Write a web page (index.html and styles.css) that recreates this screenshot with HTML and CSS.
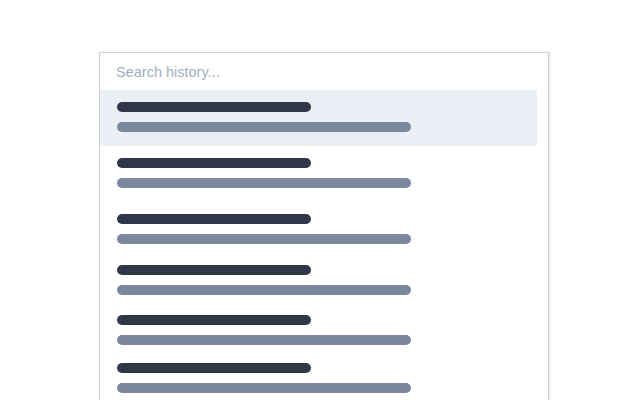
FILE: index.html
```html
<!DOCTYPE html>
<html>
<head>
<meta charset="utf-8">
<link rel="stylesheet" href="styles.css">
</head>
<body>
<div class="panel">
  <div class="search">
    <input class="search-input" type="text" placeholder="Search history...">
  </div>
  <ul class="list">
    <li class="row row--active"><span class="bar bar--title"></span><span class="bar bar--url"></span></li>
    <li class="row"><span class="bar bar--title"></span><span class="bar bar--url"></span></li>
    <li class="row row--b"><span class="bar bar--title"></span><span class="bar bar--url"></span></li>
    <li class="row row--c"><span class="bar bar--title"></span><span class="bar bar--url"></span></li>
    <li class="row row--d"><span class="bar bar--title"></span><span class="bar bar--url"></span></li>
    <li class="row row--d"><span class="bar bar--title"></span><span class="bar bar--url"></span></li>
    <li class="row"><span class="bar bar--title"></span><span class="bar bar--url"></span></li>
  </ul>
</div>
</body>
</html>
```
FILE: styles.css
```css
* { box-sizing: border-box; }
html, body { margin: 0; padding: 0; background: #fff; }
html { height: 400px; overflow: hidden; }
body {
  font-family: "Liberation Sans", Arial, sans-serif;
  padding-top: 52px;
  overflow: hidden;
  height: 400px;
}
.panel {
  margin-left: 99px;
  width: 450px;
  height: 348px;
  overflow: hidden;
  border: 1px solid #cdcfd3;
  border-bottom: 0;
  box-shadow: 1px 0 2px rgba(0,0,0,0.12);
  background: #fff;
}
.search {
  height: 37px;
  display: flex;
  align-items: center;
  padding: 0 16px;
}
.search-input {
  border: 0;
  outline: 0;
  padding: 0;
  margin: 1px 0 0;
  width: 100%;
  font-family: "Liberation Sans", Arial, sans-serif;
  font-size: 14.5px;
  color: #2d3748;
  background: transparent;
}
.search-input::placeholder { color: #a3afc0; opacity: 1; }
.list {
  list-style: none;
  margin: 0;
  padding: 0 11px 0 0;
}
.row {
  display: flex;
  flex-direction: column;
  align-items: flex-start;
  gap: 10px;
  padding: 12px 17px 14px;
}
.row--active { background: #ebf0f6; }
.row--b { padding-bottom: 9px; }
.row--c { padding-bottom: 8px; }
.row--d { padding-bottom: 6px; }
.bar {
  display: block;
  height: 10px;
  border-radius: 5px;
}
.bar--title { width: 194px; background: #303748; }
.bar--url { width: 294px; background: #7a879d; }
```
